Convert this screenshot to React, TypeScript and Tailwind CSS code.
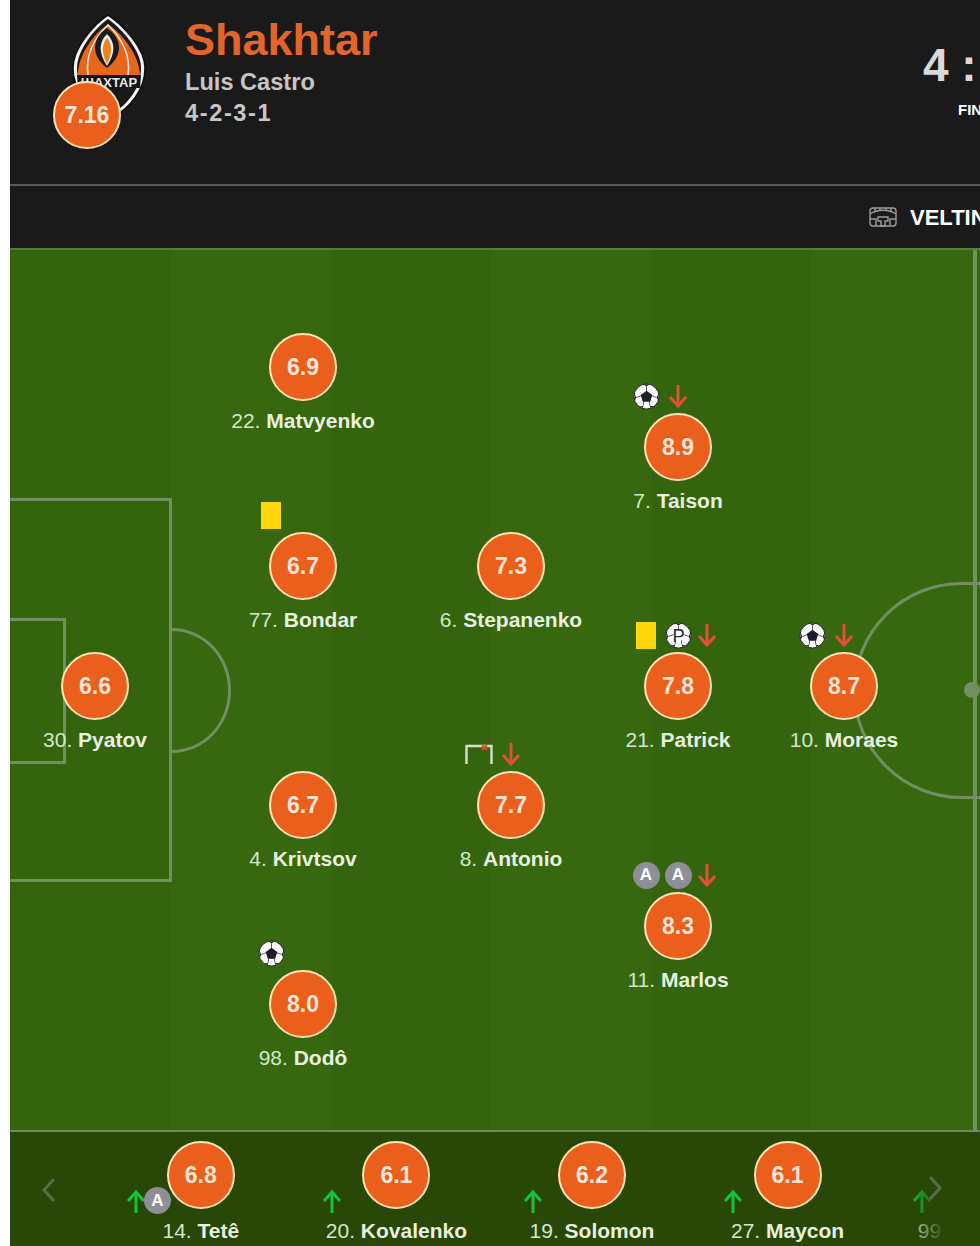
import React from "react";

const Ball = ({ letter }: { letter?: string }) => (
  <svg width="27" height="27" viewBox="0 0 28 28">
    <circle cx="14" cy="14" r="13" fill="#fff" stroke="#222" strokeWidth="1" />
    <path d="M11 1.5 L14 3.5 L17 1.5 Z M1.5 11 L3.5 15 L2 18 Z M26.5 11 L24.5 15 L26 18 Z M7 24 L10.5 23.5 L10 26 Z M21 24 L17.5 23.5 L18 26 Z" fill="#222" />
    <path d="M14 9 L14 3.5 M9 13 L3.5 15 M19 13 L24.5 15 M11 19 L10.5 23.5 M17 19 L17.5 23.5" stroke="#555" strokeWidth="1" />
    {letter ? (
      <text
        x="14"
        y="20.5"
        textAnchor="middle"
        fontSize="19"
        fill="#2a2a3a"
        fontFamily="Liberation Sans, sans-serif"
      >
        {letter}
      </text>
    ) : (
      <path d="M14 8 L20 12.5 L17.8 19.5 L10.2 19.5 L8 12.5 Z" fill="#1c1c2a" />
    )}
  </svg>
);

const ArrowDown = () => (
  <svg width="20" height="24" viewBox="0 0 20 24" fill="none" stroke="#e2503a" strokeWidth="3">
    <path d="M10 1 V21" />
    <path d="M2 13 L10 22 L18 13" />
  </svg>
);

const ArrowUp = () => (
  <svg width="20" height="24" viewBox="0 0 20 24" fill="none" stroke="#12c53a" strokeWidth="3">
    <path d="M10 23 V3" />
    <path d="M2 11 L10 2 L18 11" />
  </svg>
);

const Assist = () => (
  <div className="flex h-[27px] w-[27px] items-center justify-center rounded-full bg-[#8e8e96] text-[17px] font-bold text-white">
    A
  </div>
);

const Card = () => <div className="h-[27px] w-[20px] bg-[#ffd60a]" />;

const CornerGoal = () => (
  <svg width="28" height="20" viewBox="0 0 28 20" fill="none" stroke="#d5dfcc" strokeWidth="2.4">
    <path d="M1.5 20 V2 H26.5 V20" />
    <path d="M17 1 L22 6 M22 1 L17 6" stroke="#e0492e" strokeWidth="2" />
  </svg>
);

const Rating = ({ value }: { value: string }) => (
  <div className="flex h-[68px] w-[68px] shrink-0 items-center justify-center rounded-full border-2 border-[#fde3b4] bg-[#ea5f1c] text-[23px] font-bold text-[#fde4d6]">
    {value}
  </div>
);

const Name = ({ no, name }: { no: string; name: string }) => (
  <div className="whitespace-nowrap text-[21px] leading-[24px] text-[#e6f1df]">
    <span className="font-normal text-[#d3e8cb]">{no}. </span>
    <span className="font-bold">{name}</span>
  </div>
);

const starters = [
  { no: "22", name: "Matvyenko", rating: "6.9", pos: "left-[293px] top-[52px]", events: [] },
  { no: "77", name: "Bondar", rating: "6.7", pos: "left-[293px] top-[251px]", events: [<Card />] },
  { no: "6", name: "Stepanenko", rating: "7.3", pos: "left-[501px] top-[251px]", events: [] },
  { no: "4", name: "Krivtsov", rating: "6.7", pos: "left-[293px] top-[490px]", events: [] },
  { no: "98", name: "Dodô", rating: "8.0", pos: "left-[293px] top-[689px]", events: [<Ball />] },
  { no: "30", name: "Pyatov", rating: "6.6", pos: "left-[85px] top-[371px]", events: [] },
  { no: "8", name: "Antonio", rating: "7.7", pos: "left-[501px] top-[490px]", events: [<CornerGoal />, <ArrowDown />] },
  { no: "7", name: "Taison", rating: "8.9", pos: "left-[668px] top-[132px]", events: [<Ball />, <ArrowDown />] },
  { no: "21", name: "Patrick", rating: "7.8", pos: "left-[668px] top-[371px]", events: [<Card />, <Ball letter="P" />, <ArrowDown />] },
  { no: "10", name: "Moraes", rating: "8.7", pos: "left-[834px] top-[371px]", events: [<Ball />, <ArrowDown />] },
  { no: "11", name: "Marlos", rating: "8.3", pos: "left-[668px] top-[611px]", events: [<Assist />, <Assist />, <ArrowDown />] },
];

const subs = [
  { no: "14", name: "Tetê", rating: "6.8", arrow: "left-[23px]", assist: true },
  { no: "20", name: "Kovalenko", rating: "6.1", arrow: "left-[23px]", assist: false },
  { no: "19", name: "Solomon", rating: "6.2", arrow: "left-[29px]", assist: false },
  { no: "27", name: "Maycon", rating: "6.1", arrow: "left-[33px]", assist: false },
  { no: "99", name: "Fernando", rating: "6.4", arrow: "left-[27px]", assist: false },
];

const Logo = () => (
  <svg width="78" height="110" viewBox="70 12 78 110">
    <path
      d="M108 15 C122 24 145 48 145 68 C145 90 130 108 112 118 C92 108 72 90 73 68 C73 48 94 24 108 15 Z"
      fill="#f4f4f4"
      stroke="#0e0e0e"
      strokeWidth="1.5"
    />
    <path d="M108 19 C121 28 141 50 141 68 C141 88 128 104 112 114 C94 104 77 88 77 68 C77 50 95 28 108 19 Z" fill="#191919" />
    <path d="M108 24 C122 34 139 54 140 75 L78 75 C78 54 94 34 108 24 Z" fill="#e8661c" />
    <path d="M88 75 C85 56 94 38 108 25 C122 38 131 56 128 75" fill="none" stroke="#f5e5d8" strokeWidth="1.6" />
    <path d="M107 28 C122 38 124 55 107 68 C90 55 92 38 107 28 Z" fill="#1b1b1b" />
    <path d="M107 34 C115 42 116 52 107 66 C98 52 99 42 107 34 Z" fill="#eee" />
    <path d="M107 38 C112 44 113 52 107 64 C101 52 102 44 107 38 Z" fill="#e8861c" />
    <path d="M77 75 H141 L140 88 H78 Z" fill="#151515" />
    <text
      x="109"
      y="87"
      textAnchor="middle"
      fontSize="13"
      fontWeight="700"
      fill="#e8e8e8"
      fontFamily="Liberation Sans, sans-serif"
    >
      ШАХТАР
    </text>
  </svg>
);

const Stadium = () => (
  <svg className="shrink-0" width="28" height="22" viewBox="0 0 28 22" fill="none" stroke="#9c9c9c" strokeWidth="1.4">
    <rect x="1" y="2" width="26" height="18" rx="3" />
    <path d="M1 8 C8 3 20 3 27 8" />
    <path d="M1 13 H7 V20 M27 13 H21 V20" />
    <path d="M9 11 H19 V15 H16 V20 H12 V15 H9 Z" />
    <path d="M6 2 V6 M11 2 V4.5 M17 2 V4.5 M22 2 V6" />
  </svg>
);

const App = () => {
  return (
    <div className="h-[1246px] w-[980px] overflow-hidden bg-white pl-[10px] [font-family:'Liberation_Sans',sans-serif]">
      <header className="flex h-[184px] items-start overflow-hidden bg-[#1a1a1a] pl-[60px] pt-[12px]">
        <div className="relative h-[110px] w-[78px] shrink-0">
          <Logo />
          <div className="absolute left-[-17px] top-[69px]">
            <Rating value="7.16" />
          </div>
        </div>
        <div className="ml-[37px] mt-[2px] w-[738px] shrink-0">
          <div className="text-[45px] font-bold leading-[52px] text-[#e2662a]">Shakhtar</div>
          <div className="mt-[2px] text-[23.6px] font-bold leading-[28px] text-[#c6c6c6]">Luis Castro</div>
          <div className="mt-[3px] text-[23.6px] font-bold leading-[28px] tracking-[1.6px] text-[#c6c6c6]">
            4-2-3-1
          </div>
        </div>
        <div className="mt-[27px] shrink-0">
          <div className="whitespace-nowrap text-[46px] font-bold leading-[52px] text-[#d9d9d9]">4 : 1</div>
          <div className="mt-[10px] pl-[35px] text-[15px] font-bold leading-[18px] text-white">FINISHED</div>
        </div>
      </header>

      <div className="flex h-[64px] items-center overflow-hidden border-t-2 border-[#5a5a5a] bg-[#1a1a1a] pl-[859px]">
        <Stadium />
        <span className="ml-[13px] shrink-0 whitespace-nowrap text-[22px] font-bold text-white">VELTINS-Arena</span>
      </div>

      <main className="relative h-[882px] overflow-hidden border-t-2 border-[#5b7a4a]">
        <div className="flex h-full">
          <div className="w-[160px] bg-[#35640f]" />
          <div className="w-[162px] bg-[#37670f]" />
          <div className="w-[158px] bg-[#35640f]" />
          <div className="w-[162px] bg-[#37670f]" />
          <div className="w-[158px] bg-[#35640f]" />
          <div className="flex-1 bg-[#37670f]" />
        </div>

        <div className="absolute left-0 top-[248px] h-[384px] w-[162px] border-y-[3px] border-r-[3px] border-[#728f60]" />
        <div className="absolute left-0 top-[368px] h-[146px] w-[56px] border-y-[3px] border-r-[3px] border-[#728f60]" />
        <div className="absolute left-[162px] top-[378px] h-[125px] w-[59px] rounded-r-[59px_62px] border-y-[3px] border-r-[3px] border-[#728f60]" />
        <div className="absolute left-[843px] top-[332px] h-[217px] w-[240px] rounded-full border-[3px] border-[#728f60]" />
        <div className="absolute left-[963px] top-[-2px] h-[884px] w-[4px] bg-[#728f60]" />
        <div className="absolute left-[954px] top-[432px] h-[16px] w-[16px] rounded-full bg-[#728f60]" />

        {starters.map((p) => (
          <div key={p.no} className={`absolute flex w-0 flex-col items-center ${p.pos}`}>
            <div className="mb-[3px] box-content grid h-[28px] shrink-0 grid-cols-[34px_30px_28px] items-center justify-items-center pr-[6px]">
              {p.events.map((event, i) => (
                <div key={i}>{event}</div>
              ))}
            </div>
            <Rating value={p.rating} />
            <div className="mt-[8px]">
              <Name no={p.no} name={p.name} />
            </div>
          </div>
        ))}
      </main>

      <footer className="relative flex h-[116px] overflow-hidden border-t-2 border-[#6c8a5a] bg-[#294707] pl-[93px]">
        {subs.map((s) => (
          <div key={s.no} className="relative flex w-[195.6px] shrink-0 flex-col items-center pt-[9px]">
            <Rating value={s.rating} />
            <div className="mt-[10px]">
              <Name no={s.no} name={s.name} />
            </div>
            <div className={`absolute top-[58px] ${s.arrow}`}><ArrowUp /></div>
            {s.assist && (
              <div className="absolute left-[41px] top-[55px]"><Assist /></div>
            )}
          </div>
        ))}
        <div className="absolute right-0 top-0 h-full w-[75px] bg-gradient-to-r from-[#29470700] to-[#294707] to-[55%]" />
        <svg className="absolute left-[29px] top-[44px]" width="20" height="28" viewBox="0 0 20 28" fill="none" stroke="#52704a" strokeWidth="3">
          <path d="M15 3 L5 14 L15 25" />
        </svg>
        <svg className="absolute left-[915px] top-[42px]" width="20" height="28" viewBox="0 0 20 28" fill="none" stroke="#52704a" strokeWidth="3">
          <path d="M5 3 L15 14 L5 25" />
        </svg>
      </footer>
    </div>
  );
};

export default App;
